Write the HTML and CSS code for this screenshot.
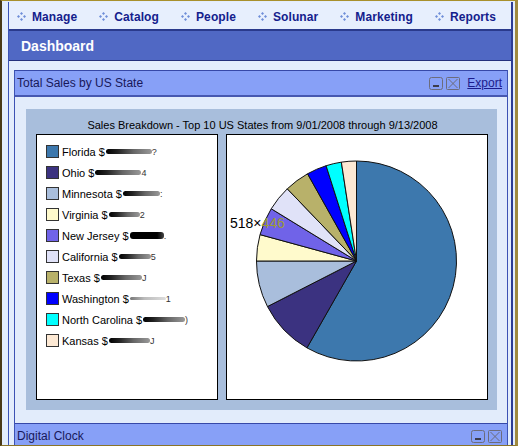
FILE: index.html
```html
<!DOCTYPE html>
<html>
<head>
<meta charset="utf-8">
<title>Dashboard</title>
<link rel="stylesheet" href="styles.css">
</head>
<body>
<div class="window">
  <div class="app">
    <nav class="menu">
      <a class="menu-item"><svg class="dots" viewBox="0 0 9 9"><polygon points="4.5,0 6,1.5 4.5,3 3,1.5"/><polygon points="1.5,3 3,4.5 1.5,6 0,4.5"/><polygon points="7.5,3 9,4.5 7.5,6 6,4.5"/><polygon points="4.5,6 6,7.5 4.5,9 3,7.5"/></svg>Manage</a>
      <a class="menu-item"><svg class="dots" viewBox="0 0 9 9"><polygon points="4.5,0 6,1.5 4.5,3 3,1.5"/><polygon points="1.5,3 3,4.5 1.5,6 0,4.5"/><polygon points="7.5,3 9,4.5 7.5,6 6,4.5"/><polygon points="4.5,6 6,7.5 4.5,9 3,7.5"/></svg>Catalog</a>
      <a class="menu-item"><svg class="dots" viewBox="0 0 9 9"><polygon points="4.5,0 6,1.5 4.5,3 3,1.5"/><polygon points="1.5,3 3,4.5 1.5,6 0,4.5"/><polygon points="7.5,3 9,4.5 7.5,6 6,4.5"/><polygon points="4.5,6 6,7.5 4.5,9 3,7.5"/></svg>People</a>
      <a class="menu-item"><svg class="dots" viewBox="0 0 9 9"><polygon points="4.5,0 6,1.5 4.5,3 3,1.5"/><polygon points="1.5,3 3,4.5 1.5,6 0,4.5"/><polygon points="7.5,3 9,4.5 7.5,6 6,4.5"/><polygon points="4.5,6 6,7.5 4.5,9 3,7.5"/></svg>Solunar</a>
      <a class="menu-item"><svg class="dots" viewBox="0 0 9 9"><polygon points="4.5,0 6,1.5 4.5,3 3,1.5"/><polygon points="1.5,3 3,4.5 1.5,6 0,4.5"/><polygon points="7.5,3 9,4.5 7.5,6 6,4.5"/><polygon points="4.5,6 6,7.5 4.5,9 3,7.5"/></svg>Marketing</a>
      <a class="menu-item"><svg class="dots" viewBox="0 0 9 9"><polygon points="4.5,0 6,1.5 4.5,3 3,1.5"/><polygon points="1.5,3 3,4.5 1.5,6 0,4.5"/><polygon points="7.5,3 9,4.5 7.5,6 6,4.5"/><polygon points="4.5,6 6,7.5 4.5,9 3,7.5"/></svg>Reports</a>
    </nav>
    <div class="dash">Dashboard</div>
    <div class="content">
      <section class="panel">
        <header class="panel-head">
          <span class="panel-title">Total Sales by US State</span>
          <span class="tools">
            <svg class="tool" viewBox="0 0 14 13"><rect x="0.5" y="0.5" width="13" height="12" rx="2" fill="none" stroke="#6c6c7c"/><rect x="4" y="8" width="6" height="2" fill="#3c3c4c"/></svg>
            <svg class="tool" viewBox="0 0 14 13"><rect x="0.5" y="0.5" width="13" height="12" rx="1" fill="none" stroke="#6c6c7c"/><path d="M2.5 2 L11.5 11 M11.5 2 L2.5 11" stroke="#6c6c7c" fill="none"/></svg>
            <a class="export">Export</a>
          </span>
        </header>
        <div class="panel-body">
          <div class="chart">
            <div class="chart-title">Sales Breakdown - Top 10 US States from 9/01/2008 through 9/13/2008</div>
            <div class="chart-row">
              <ul class="legend">
                <li><span class="swatch c1"></span>Florida $<span class="smudge" style="width:46px"></span><span class="tail">?</span></li>
                <li><span class="swatch c2"></span>Ohio $<span class="smudge" style="width:46px"></span><span class="tail">4</span></li>
                <li><span class="swatch c3"></span>Minnesota $<span class="smudge" style="width:37px"></span><span class="tail">:</span></li>
                <li><span class="swatch c4"></span>Virginia $<span class="smudge" style="width:31px"></span><span class="tail">2</span></li>
                <li><span class="swatch c5"></span>New Jersey $<span class="smudge heavy" style="width:34px"></span><span class="tail">.</span></li>
                <li><span class="swatch c6"></span>California $<span class="smudge" style="width:32px"></span><span class="tail">5</span></li>
                <li><span class="swatch c7"></span>Texas $<span class="smudge" style="width:41px"></span><span class="tail">J</span></li>
                <li><span class="swatch c8"></span>Washington $<span class="smudge light" style="width:36px"></span><span class="tail">1</span></li>
                <li><span class="swatch c9"></span>North Carolina $<span class="smudge" style="width:42px"></span><span class="tail">)</span></li>
                <li><span class="swatch c10"></span>Kansas $<span class="smudge" style="width:41px"></span><span class="tail">J</span></li>
              </ul>
              <div class="pie-box">
                <svg class="pie" viewBox="0 0 260 264" width="260" height="264">
                  <g stroke="#111" stroke-width="1" stroke-linejoin="round">
                    <path fill="#3d78ad" d="M129.5 126 L129.5 26 A100 100 0 1 1 79.95 212.86 Z"/>
                    <path fill="#3b3280" d="M129.5 126 L79.95 212.86 A100 100 0 0 1 40.48 171.55 Z"/>
                    <path fill="#a9bedc" d="M129.5 126 L40.48 171.55 A100 100 0 0 1 29.5 126 Z"/>
                    <path fill="#fffacc" d="M129.5 126 L29.5 126 A100 100 0 0 1 33.04 99.61 Z"/>
                    <path fill="#7063e8" d="M129.5 126 L33.04 99.61 A100 100 0 0 1 44.24 73.75 Z"/>
                    <path fill="#e0e2f8" d="M129.5 126 L44.24 73.75 A100 100 0 0 1 60.29 53.82 Z"/>
                    <path fill="#b8b16a" d="M129.5 126 L60.29 53.82 A100 100 0 0 1 80.56 38.79 Z"/>
                    <path fill="#0000ff" d="M129.5 126 L80.56 38.79 A100 100 0 0 1 99.1 30.73 Z"/>
                    <path fill="#00ffff" d="M129.5 126 L99.1 30.73 A100 100 0 0 1 114.37 27.15 Z"/>
                    <path fill="#fde9d4" d="M129.5 126 L114.37 27.15 A100 100 0 0 1 129.5 26 Z"/>
                  </g>
                </svg>
                <span class="size-tag">518×<span class="size-h">446</span></span>
              </div>
            </div>
          </div>
        </div>
      </section>
      <section class="panel">
        <header class="panel-head">
          <span class="panel-title">Digital Clock</span>
          <span class="tools">
            <svg class="tool" viewBox="0 0 14 13"><rect x="0.5" y="0.5" width="13" height="12" rx="2" fill="none" stroke="#6c6c7c"/><rect x="4" y="8" width="6" height="2" fill="#3c3c4c"/></svg>
            <svg class="tool" viewBox="0 0 14 13"><rect x="0.5" y="0.5" width="13" height="12" rx="1" fill="none" stroke="#6c6c7c"/><path d="M2.5 2 L11.5 11 M11.5 2 L2.5 11" stroke="#6c6c7c" fill="none"/></svg>
          </span>
        </header>
      </section>
    </div>
  </div>
</div>
</body>
</html>
```
FILE: styles.css
```css
html, body {
  margin: 0;
  padding: 0;
}
body {
  width: 518px;
  height: 446px;
  overflow: hidden;
  background: #e3edfc;
  font-family: "Liberation Sans", Arial, sans-serif;
}
.window {
  box-sizing: border-box;
  height: 446px;
  border-top: 1px solid #a8902c;
  border-left: 2px solid #4a3a16;
  border-right: 3px solid #a08a40;
  border-bottom: 1px solid #8a7428;
  padding: 1px 2px 0 6px;
  background: #e3edfc;
  overflow: hidden;
}
.app {
  border-left: 1px solid #3c52b4;
  border-right: 2px solid #2c3c94;
  min-height: 100%;
}
.menu {
  display: flex;
  align-items: center;
  gap: 22px;
  height: 27px;
  padding-left: 8px;
  background: #e7effd;
  border-bottom: 2px solid #2a3a8c;
}
.menu-item {
  display: flex;
  align-items: center;
  font-size: 12px;
  font-weight: bold;
  letter-spacing: 0.1px;
  color: #14208c;
  text-decoration: none;
  padding-top: 2px;
}
.dots {
  width: 9px;
  height: 9px;
  margin-right: 6px;
  fill: #6f8ed8;
}
.dash {
  display: flex;
  align-items: center;
  height: 29px;
  padding-left: 12px;
  background: #5068c4;
  color: #fff;
  font-size: 14px;
  font-weight: bold;
  border-bottom: 1px solid #24307c;
}
.content {
  padding: 9px 3px 0 5px;
}
.panel {
  border-left: 1px solid #3c52b4;
  border-right: 1px solid #3c52b4;
}
.panel-head {
  display: flex;
  align-items: center;
  justify-content: space-between;
  height: 24px;
  padding: 0 5px 0 2px;
  background: #87a0f7;
  border-top: 1px solid #3648a8;
  border-bottom: 2px solid #4658b0;
}
.panel-title {
  font-size: 12px;
  color: #18185a;
}
.tools {
  display: flex;
  align-items: center;
  gap: 3px;
}
.tool {
  width: 14px;
  height: 13px;
  display: block;
}
.export {
  margin-left: 4px;
  font-size: 12px;
  color: #1c1c8c;
  text-decoration: underline;
}
.panel-body {
  background: #e2ecfb;
  padding: 12px 10px 13px 11px;
}
.chart {
  background: #a8bedc;
  padding: 0 8px 10px 10px;
}
.chart-title {
  box-sizing: border-box;
  height: 25px;
  padding-top: 10px;
  line-height: 13px;
  font-size: 11px;
  text-align: center;
  color: #000;
}
.chart-row {
  display: flex;
  gap: 8px;
}
.legend {
  box-sizing: border-box;
  width: 182px;
  height: 266px;
  margin: 0;
  padding: 6px 0 0 9px;
  list-style: none;
  background: #fff;
  border: 1px solid #000;
}
.legend li {
  display: flex;
  align-items: center;
  height: 21px;
  font-size: 11px;
  color: #000;
  white-space: nowrap;
}
.swatch {
  box-sizing: border-box;
  width: 13px;
  height: 13px;
  margin-right: 3px;
  border: 1px solid #333;
}
.c1 { background: #3d78ad; }
.c2 { background: #3b3280; }
.c3 { background: #a9bedc; }
.c4 { background: #fffacc; }
.c5 { background: #7063e8; }
.c6 { background: #e0e2f8; }
.c7 { background: #b8b16a; }
.c8 { background: #0000ff; }
.c9 { background: #00ffff; }
.c10 { background: #fde9d4; }
.smudge {
  display: inline-block;
  height: 5px;
  margin-left: 1px;
  border-radius: 3px;
  background: linear-gradient(90deg, #000 0%, #222 25%, #666 60%, #999 100%);
  filter: blur(0.7px);
}
.smudge.heavy {
  height: 7px;
  background: linear-gradient(90deg, #000 0%, #000 80%, #444 100%);
}
.smudge.light {
  height: 3px;
  background: linear-gradient(90deg, #777 0%, #bbb 40%, #ddd 100%);
}
.tail {
  font-size: 9px;
  color: #333;
}
.pie-box {
  position: relative;
  box-sizing: border-box;
  width: 262px;
  height: 266px;
  background: #fff;
  border: 1px solid #000;
}
.pie {
  display: block;
}
.size-tag {
  position: absolute;
  left: 3px;
  top: 80px;
  font-size: 14px;
  color: #000;
}
.size-h {
  color: #9c9c34;
}
```
